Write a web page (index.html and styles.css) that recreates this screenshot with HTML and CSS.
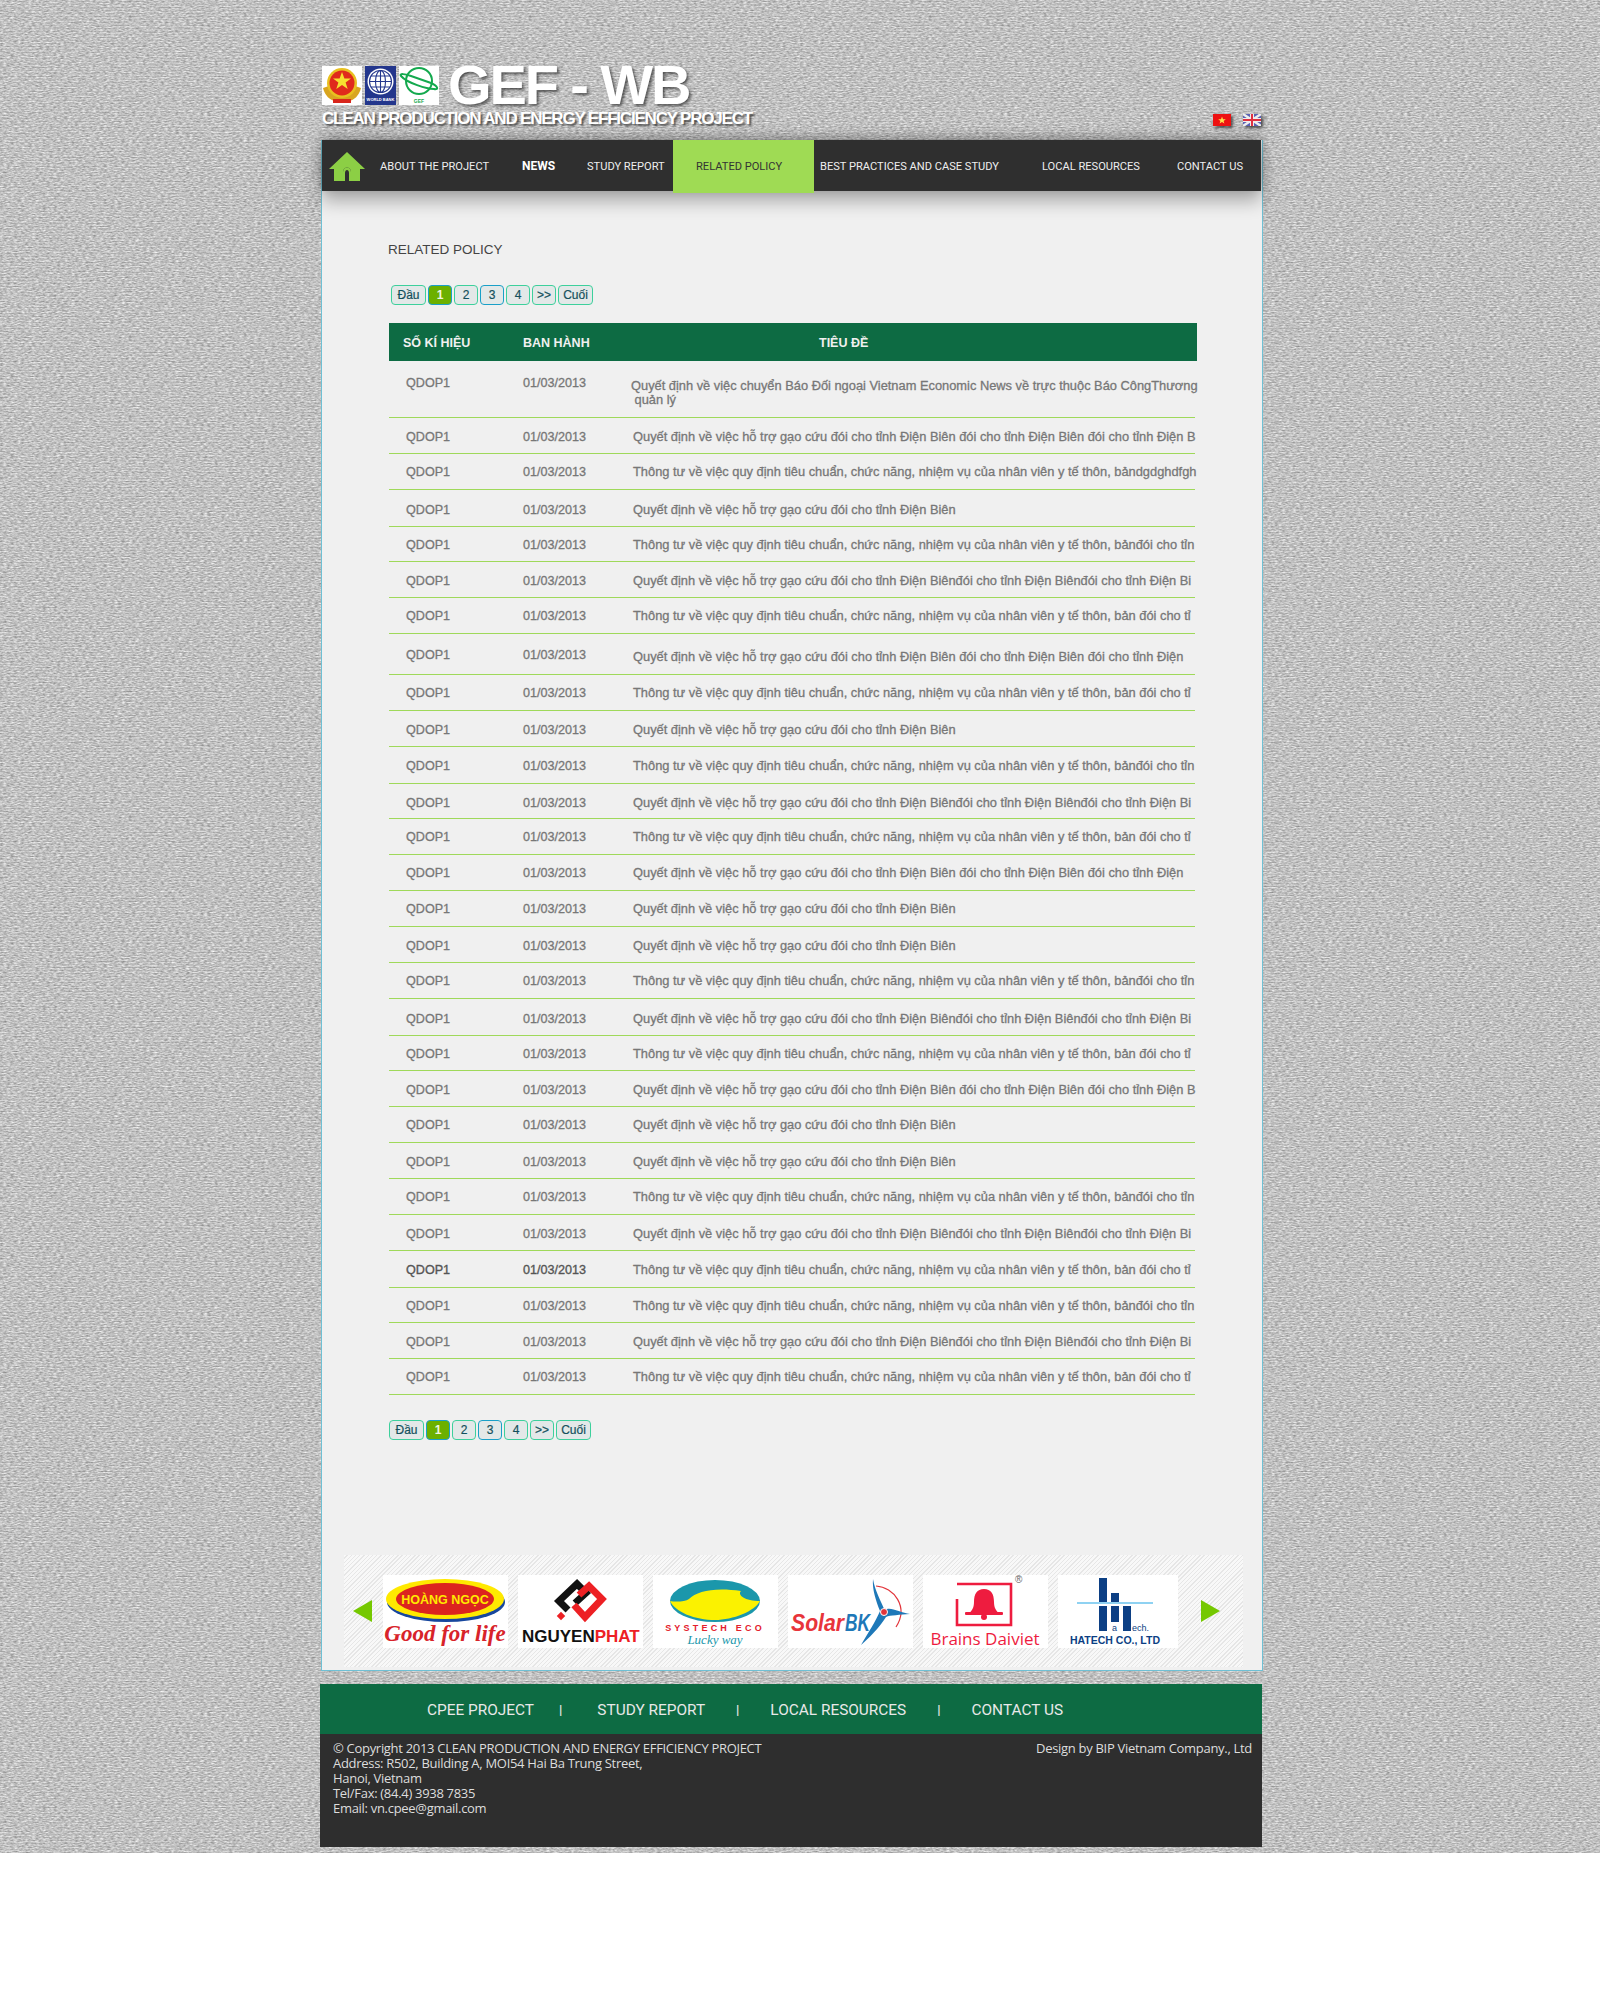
FILE: index.html
```html
<!DOCTYPE html>
<html>
<head>
    <meta charset="utf-8">
    <title>GEF - WB Related Policy</title>
    <link rel="stylesheet" href="styles.css">
</head>
<body>
<div class="page">
<div class="wrap">
    <!-- Header -->
    <div class="header">
        <div class="brand">
            <div class="brand-top">
                <div class="seals">
                    <svg class="seal" width="40" height="39" viewBox="0 0 40 39">
                        <rect width="40" height="39" fill="#fff"/>
                        <path d="M1 22 C3 30 8 34 13 35 L27 35 C32 34 37 30 39 22 L33 20 L7 20Z" fill="#d9a520"/>
                        <circle cx="20" cy="17" r="15" fill="#e8c020"/>
                        <circle cx="20" cy="17" r="12.5" fill="#e02a1c"/>
                        <polygon points="20,6 22.4,12.5 29,12.5 23.6,16.5 25.7,23 20,19 14.3,23 16.4,16.5 11,12.5 17.6,12.5" fill="#f6e030"/>
                        <rect x="11" y="33" width="18" height="4" fill="#d8261c"/>
                    </svg>
                    <svg class="seal" width="31" height="39" viewBox="0 0 31 39">
                        <rect width="31" height="39" fill="#23368c"/>
                        <circle cx="15.5" cy="15.5" r="13" fill="#fff"/>
                        <g fill="none" stroke="#23368c" stroke-width="1.1">
                            <circle cx="15.5" cy="15.5" r="11"/>
                            <ellipse cx="15.5" cy="15.5" rx="5" ry="11"/>
                            <path d="M15.5 4.5V26.5M4.5 15.5H26.5M6 10H25M6 21H25"/>
                        </g>
                        <text x="15.5" y="35" class="seal-text">WORLD BANK</text>
                    </svg>
                    <svg class="seal" width="40" height="39" viewBox="0 0 40 39">
                        <rect width="40" height="39" fill="#fff"/>
                        <g fill="none" stroke="#14a94e" stroke-width="2">
                            <circle cx="20" cy="15" r="13"/>
                            <path d="M2 10 C0 7 6 8 12 10 L32 17 C39 20 40 24 35 23 C28 23 8 17 2 10Z"/>
                        </g>
                        <text x="20" y="37" class="seal-gef">GEF</text>
                    </svg>
                </div>
                <div class="brand-name">GEF - WB</div>
            </div>
            <div class="brand-sub">CLEAN PRODUCTION AND ENERGY EFFICIENCY PROJECT</div>
        </div>
        <div class="flags">
            <svg class="flag" width="18" height="12" viewBox="0 0 18 12">
                <rect width="18" height="12" fill="#ee1111"/>
                <polygon points="9,2.5 10,5.2 12.8,5.2 10.6,6.9 11.4,9.6 9,8 6.6,9.6 7.4,6.9 5.2,5.2 8,5.2" fill="#ffe24a"/>
            </svg>
            <svg class="flag" width="18" height="12" viewBox="0 0 18 12">
                <rect width="18" height="12" fill="#5a62b4"/>
                <path d="M0 0L18 12M18 0L0 12" stroke="#eee" stroke-width="2.4"/>
                <path d="M9 0V12M0 6H18" stroke="#eee" stroke-width="4"/>
                <path d="M9 0V12M0 6H18" stroke="#e03040" stroke-width="2"/>
            </svg>
        </div>
    </div>

    <div class="panel">
        <!-- Menu -->
        <div class="nav">
            <a class="nav-home" href="#">
                <svg width="36" height="29" viewBox="0 0 36 29">
                    <path d="M18 0L36 17H31V29H22V20C22 14 14 14 14 20V29H5V17H0Z" fill="#8ccf45"/>
                    <path d="M14 20C14 14 22 14 22 20V29H20V21C20 17 16 17 16 21V29H14Z" fill="#8ccf45"/>
                </svg>
            </a>
            <a href="#">ABOUT THE PROJECT</a>
            <a class="nav-news" href="#">NEWS</a>
            <a href="#">STUDY REPORT</a>
            <a class="nav-active" href="#">RELATED POLICY</a>
            <a class="nav-best" href="#">BEST PRACTICES AND CASE STUDY</a>
            <a href="#">LOCAL RESOURCES</a>
            <a href="#">CONTACT US</a>
        </div>

        <div class="content">
            <h1 class="page-title">RELATED POLICY</h1>

            <div class="pager pager-top">
                <a class="wide" href="#">Đầu</a>
                <a class="on" href="#">1</a>
                <a href="#">2</a>
                <a class="blue" href="#">3</a>
                <a href="#">4</a>
                <a href="#">&gt;&gt;</a>
                <a class="wide" href="#">Cuối</a>
            </div>

            <div class="table">
                <div class="table-head">
                    <span class="th-code">SỐ KÍ HIỆU</span>
                    <span class="th-date">BAN HÀNH</span>
                    <span class="th-title">TIÊU ĐỀ</span>
                </div>

                <div class="row row-first">
                    <span class="code">QDOP1</span>
                    <span class="date">01/03/2013</span>
                    <span class="title">Quyết định về việc chuyển Báo Đối ngoại Vietnam Economic News về trực thuộc Báo CôngThương<br>&nbsp;quản lý</span>
                </div>
                <div class="row q"><span class="code">QDOP1</span><span class="date">01/03/2013</span><span class="title">Quyết định về việc hỗ trợ gạo cứu đói cho tỉnh Điện Biên đói cho tỉnh Điện Biên đói cho tỉnh Điện B</span></div>
                <div class="row"><span class="code">QDOP1</span><span class="date">01/03/2013</span><span class="title">Thông tư về việc quy định tiêu chuẩn, chức năng, nhiệm vụ của nhân viên y tế thôn, bảndgdghdfgh</span></div>
                <div class="row q h37"><span class="code">QDOP1</span><span class="date">01/03/2013</span><span class="title">Quyết định về việc hỗ trợ gạo cứu đói cho tỉnh Điện Biên</span></div>
                <div class="row h35"><span class="code">QDOP1</span><span class="date">01/03/2013</span><span class="title">Thông tư về việc quy định tiêu chuẩn, chức năng, nhiệm vụ của nhân viên y tế thôn, bảnđói cho tỉn</span></div>
                <div class="row q"><span class="code">QDOP1</span><span class="date">01/03/2013</span><span class="title">Quyết định về việc hỗ trợ gạo cứu đói cho tỉnh Điện Biênđói cho tỉnh Điện Biênđói cho tỉnh Điện Bi</span></div>
                <div class="row"><span class="code">QDOP1</span><span class="date">01/03/2013</span><span class="title">Thông tư về việc quy định tiêu chuẩn, chức năng, nhiệm vụ của nhân viên y tế thôn, bản đói cho tỉ</span></div>
                <div class="row h41"><span class="code">QDOP1</span><span class="date">01/03/2013</span><span class="title low">Quyết định về việc hỗ trợ gạo cứu đói cho tỉnh Điện Biên đói cho tỉnh Điện Biên đói cho tỉnh Điện</span></div>
                <div class="row"><span class="code">QDOP1</span><span class="date">01/03/2013</span><span class="title">Thông tư về việc quy định tiêu chuẩn, chức năng, nhiệm vụ của nhân viên y tế thôn, bản đói cho tỉ</span></div>
                <div class="row q"><span class="code">QDOP1</span><span class="date">01/03/2013</span><span class="title">Quyết định về việc hỗ trợ gạo cứu đói cho tỉnh Điện Biên</span></div>
                <div class="row h37"><span class="code">QDOP1</span><span class="date">01/03/2013</span><span class="title">Thông tư về việc quy định tiêu chuẩn, chức năng, nhiệm vụ của nhân viên y tế thôn, bảnđói cho tỉn</span></div>
                <div class="row q h35"><span class="code">QDOP1</span><span class="date">01/03/2013</span><span class="title">Quyết định về việc hỗ trợ gạo cứu đói cho tỉnh Điện Biênđói cho tỉnh Điện Biênđói cho tỉnh Điện Bi</span></div>
                <div class="row"><span class="code">QDOP1</span><span class="date">01/03/2013</span><span class="title">Thông tư về việc quy định tiêu chuẩn, chức năng, nhiệm vụ của nhân viên y tế thôn, bản đói cho tỉ</span></div>
                <div class="row"><span class="code">QDOP1</span><span class="date">01/03/2013</span><span class="title">Quyết định về việc hỗ trợ gạo cứu đói cho tỉnh Điện Biên đói cho tỉnh Điện Biên đói cho tỉnh Điện</span></div>
                <div class="row"><span class="code">QDOP1</span><span class="date">01/03/2013</span><span class="title">Quyết định về việc hỗ trợ gạo cứu đói cho tỉnh Điện Biên</span></div>
                <div class="row q"><span class="code">QDOP1</span><span class="date">01/03/2013</span><span class="title">Quyết định về việc hỗ trợ gạo cứu đói cho tỉnh Điện Biên</span></div>
                <div class="row"><span class="code">QDOP1</span><span class="date">01/03/2013</span><span class="title">Thông tư về việc quy định tiêu chuẩn, chức năng, nhiệm vụ của nhân viên y tế thôn, bảnđói cho tỉn</span></div>
                <div class="row q h37"><span class="code">QDOP1</span><span class="date">01/03/2013</span><span class="title">Quyết định về việc hỗ trợ gạo cứu đói cho tỉnh Điện Biênđói cho tỉnh Điện Biênđói cho tỉnh Điện Bi</span></div>
                <div class="row h35"><span class="code">QDOP1</span><span class="date">01/03/2013</span><span class="title">Thông tư về việc quy định tiêu chuẩn, chức năng, nhiệm vụ của nhân viên y tế thôn, bản đói cho tỉ</span></div>
                <div class="row q"><span class="code">QDOP1</span><span class="date">01/03/2013</span><span class="title">Quyết định về việc hỗ trợ gạo cứu đói cho tỉnh Điện Biên đói cho tỉnh Điện Biên đói cho tỉnh Điện B</span></div>
                <div class="row"><span class="code">QDOP1</span><span class="date">01/03/2013</span><span class="title">Quyết định về việc hỗ trợ gạo cứu đói cho tỉnh Điện Biên</span></div>
                <div class="row q"><span class="code">QDOP1</span><span class="date">01/03/2013</span><span class="title">Quyết định về việc hỗ trợ gạo cứu đói cho tỉnh Điện Biên</span></div>
                <div class="row"><span class="code">QDOP1</span><span class="date">01/03/2013</span><span class="title">Thông tư về việc quy định tiêu chuẩn, chức năng, nhiệm vụ của nhân viên y tế thôn, bảnđói cho tỉn</span></div>
                <div class="row q"><span class="code">QDOP1</span><span class="date">01/03/2013</span><span class="title">Quyết định về việc hỗ trợ gạo cứu đói cho tỉnh Điện Biênđói cho tỉnh Điện Biênđói cho tỉnh Điện Bi</span></div>
                <div class="row h37 dark"><span class="code">QDOP1</span><span class="date">01/03/2013</span><span class="title">Thông tư về việc quy định tiêu chuẩn, chức năng, nhiệm vụ của nhân viên y tế thôn, bản đói cho tỉ</span></div>
                <div class="row h35"><span class="code">QDOP1</span><span class="date">01/03/2013</span><span class="title">Thông tư về việc quy định tiêu chuẩn, chức năng, nhiệm vụ của nhân viên y tế thôn, bảnđói cho tỉn</span></div>
                <div class="row q"><span class="code">QDOP1</span><span class="date">01/03/2013</span><span class="title">Quyết định về việc hỗ trợ gạo cứu đói cho tỉnh Điện Biênđói cho tỉnh Điện Biênđói cho tỉnh Điện Bi</span></div>
                <div class="row"><span class="code">QDOP1</span><span class="date">01/03/2013</span><span class="title">Thông tư về việc quy định tiêu chuẩn, chức năng, nhiệm vụ của nhân viên y tế thôn, bản đói cho tỉ</span></div>
            </div>

            <div class="pager pager-bottom">
                <a class="wide" href="#">Đầu</a>
                <a class="on" href="#">1</a>
                <a href="#">2</a>
                <a class="blue" href="#">3</a>
                <a href="#">4</a>
                <a href="#">&gt;&gt;</a>
                <a class="wide" href="#">Cuối</a>
            </div>
        </div>

        <!-- Logo partner -->
        <div class="partners">
            <span class="arrow arrow-left"></span>
            <div class="logo">
                <svg width="125" height="73" viewBox="0 0 125 73">
                    <ellipse cx="63" cy="27" rx="59" ry="20" fill="#17479e"/>
                    <ellipse cx="62" cy="24" rx="59" ry="20" fill="#ffe900"/>
                    <ellipse cx="62" cy="24" rx="49" ry="16" fill="#dc241f"/>
                    <text x="62" y="29" class="lg-hoang">HOÀNG NGỌC</text>
                    <text x="62" y="66" class="lg-good">Good for life</text>
                </svg>
            </div>
            <div class="logo">
                <svg width="125" height="73" viewBox="0 0 125 73">
                    <g fill="none" stroke-width="7">
                        <path d="M50 35L41 26L59 9L68 18L57 28" stroke="#111"/>
                        <path d="M61 20L71 11L84 24L67 42L56 30" stroke="#ed2024"/>
                    </g>
                    <rect x="40" y="38" width="6" height="6" transform="rotate(45 43 41)" fill="#ed2024"/>
                    <text x="4" y="67" class="lg-nguyen">NGUYEN<tspan class="lg-phat">PHAT</tspan></text>
                </svg>
            </div>
            <div class="logo">
                <svg width="125" height="73" viewBox="0 0 125 73">
                    <ellipse cx="62" cy="26" rx="45" ry="21" fill="#1b97ab"/>
                    <path d="M17 26C22 27 32 27 36 24C44 16 62 12 88 16C84 20 92 26 107 26C102 36 80 45 62 45C42 45 22 37 17 26Z" fill="#fbf200"/>
                    <text x="62" y="56" class="lg-systech">SYSTECH ECO</text>
                    <text x="62" y="69" class="lg-lucky">Lucky way</text>
                </svg>
            </div>
            <div class="logo">
                <svg width="125" height="73" viewBox="0 0 125 73">
                    <path d="M88 11C106 12 121 32 108 52" fill="none" stroke="#e2343a" stroke-width="1.2"/>
                    <path d="M85 4C87 16 93 26 97 36C100 30 112 38 122 39C112 40 102 40 98 42C92 52 80 64 73 70C80 58 88 46 92 36C88 26 84 14 85 4Z" fill="#1e78b8"/>
                    <circle cx="96" cy="37" r="3.5" fill="#e2343a" stroke="#fff"/>
                    <text x="3" y="56" class="lg-solar" textLength="53" lengthAdjust="spacingAndGlyphs">Solar</text>
                    <text x="57" y="56" class="lg-solar lg-bk" textLength="25" lengthAdjust="spacingAndGlyphs">BK</text>
                </svg>
            </div>
            <div class="logo">
                <svg width="125" height="73" viewBox="0 0 125 73">
                    <path d="M34 9H88V50H34V24" fill="none" stroke="#ee1c3f" stroke-width="2.6"/>
                    <path d="M61 14C68 14 71 19 71 27C71 33 73 36 78 40H44C49 36 51 33 51 27C51 19 54 14 61 14Z" fill="#ee1c3f"/>
                    <rect x="42" y="37" width="38" height="3" rx="1" fill="#ee1c3f"/>
                    <circle cx="61" cy="42" r="3" fill="#ee1c3f"/>
                    <text x="92" y="8" class="lg-reg">®</text>
                    <text x="62" y="70" class="lg-brains">Brains Daiviet</text>
                </svg>
            </div>
            <div class="logo logo-last">
                <svg width="120" height="73" viewBox="0 0 120 73">
                    <rect x="41" y="3" width="8" height="24" fill="#0c3f84"/>
                    <rect x="53" y="18" width="8" height="9" fill="#0c3f84"/>
                    <rect x="19" y="27" width="76" height="2" fill="#8fd2f2"/>
                    <rect x="41" y="31" width="8" height="25" fill="#0c3f84"/>
                    <rect x="53" y="31" width="8" height="16" fill="#0c3f84"/>
                    <rect x="65" y="31" width="8" height="25" fill="#0c3f84"/>
                    <text x="54" y="56" class="lg-ha">a</text>
                    <text x="74" y="56" class="lg-ha">ech.</text>
                    <text x="57" y="69" class="lg-hatech">HATECH CO., LTD</text>
                </svg>
            </div>
            <span class="arrow arrow-right"></span>
        </div>
    </div>

    <!-- Footer -->
    <div class="footer">
        <div class="footer-nav">
            <a class="first" href="#">CPEE PROJECT</a><span class="sep">|</span>
            <a href="#">STUDY REPORT</a><span class="sep">|</span>
            <a href="#">LOCAL RESOURCES</a><span class="sep">|</span>
            <a href="#">CONTACT US</a>
        </div>
        <div class="footer-info">
            <p>© Copyright 2013 CLEAN PRODUCTION AND ENERGY EFFICIENCY PROJECT<br>
            Address: R502, Building A, MOI54 Hai Ba Trung Street,<br>
            Hanoi, Vietnam<br>
            Tel/Fax: (84.4) 3938 7835<br>
            Email: vn.cpee@gmail.com</p>
            <p>Design by BIP Vietnam Company., Ltd</p>
        </div>
    </div>
</div>
</div>
</body>
</html>
```
FILE: styles.css
```css
body {
    margin: 0;
    background: #fff;
    font-family: "Liberation Sans", Arial, sans-serif;
}

a {
    color: inherit;
    text-decoration: none;
}

.page {
    padding-bottom: 6px;
    background-color: #bdbdbd;
    background-image:
        repeating-linear-gradient(0deg, rgba(0,0,0,.06) 0 1px, transparent 1px 3px),
        url("data:image/svg+xml,%3Csvg xmlns='http://www.w3.org/2000/svg' width='400' height='400'%3E%3Cfilter id='n' color-interpolation-filters='sRGB'%3E%3CfeTurbulence type='fractalNoise' baseFrequency='.28 .8' numOctaves='2' stitchTiles='stitch'/%3E%3CfeColorMatrix values='.5 0 0 0 .52 .5 0 0 0 .52 .5 0 0 0 .52 0 0 0 0 1'/%3E%3C/filter%3E%3Crect width='400' height='400' filter='url(%23n)'/%3E%3C/svg%3E");
}

.wrap {
    width: 960px;
    margin: 0 auto;
}

/* Header */
.header {
    display: flex;
    justify-content: space-between;
    align-items: flex-end;
    box-sizing: border-box;
    width: 941px;
    height: 140px;
    padding: 60px 0 14px 2px;
}

.brand {
    align-self: flex-start;
    color: #fff;
    font-weight: bold;
}

.brand-top {
    display: flex;
    align-items: center;
}

.seals {
    display: flex;
    align-items: center;
    gap: 3px;
    width: 126px;
}

.seal-text {
    font-size: 4px;
    fill: #fff;
    text-anchor: middle;
}

.seal-gef {
    font-size: 5px;
    font-weight: bold;
    fill: #14a94e;
    text-anchor: middle;
}

.brand-name {
    font-size: 56px;
    line-height: 50px;
    letter-spacing: -2.1px;
    text-shadow: 2px 2px 3px rgba(0,0,0,.55);
}

.brand-sub {
    font-size: 17px;
    line-height: 18px;
    letter-spacing: -1.2px;
    white-space: nowrap;
    text-shadow: 2px 2px 2px rgba(0,0,0,.6);
}

.flags {
    display: flex;
    gap: 12px;
}

.flag {
    display: block;
    box-shadow: 2px 2px 3px rgba(0,0,0,.6);
}

/* Panel */
.panel {
    box-sizing: border-box;
    width: 942px;
    margin-left: 1px;
    height: 1531px;
    background: #f0f0f0;
    border: 1px solid #6fc0d4;
    border-top: 0;
}

.nav {
    display: grid;
    grid-template-columns: 58px 142px 65px 86px 141px 228px 135px 84px;
    width: 939px;
    height: 51px;
    background: #2f2f2f;
    color: #eee;
    font-family: Roboto, "Liberation Sans", sans-serif;
    font-size: 11.1px;
    line-height: 53px;
    white-space: nowrap;
    box-shadow: 0 10px 18px rgba(0,0,0,.3), 0 -4px 10px rgba(0,0,0,.25);
}

.nav-home {
    padding: 12px 0 0 7px;
    line-height: 0;
}

.nav-news {
    color: #fff;
    font-size: 12px;
    font-weight: bold;
}

.nav-active {
    padding-left: 23px;
    background: #9fdb54;
    color: #333;
}

.nav-best {
    padding-left: 6px;
}

.content {
    padding: 0 0 0 66px;
}

.page-title {
    margin: 0;
    padding-top: 50px;
    color: #444;
    font-size: 13.5px;
    font-weight: normal;
    line-height: 18px;
}

/* Pagination */
.pager {
    display: flex;
    gap: 2px;
}

.pager-top {
    margin: 26px 0 18px 3px;
}

.pager-bottom {
    margin: 25px 0 0 1px;
}

.pager a {
    box-sizing: border-box;
    width: 24px;
    height: 20px;
    background: #e3e8e8;
    border: 1px solid #3dd09c;
    border-radius: 4px;
    color: #14505c;
    font-size: 12px;
    line-height: 18px;
    text-align: center;
    -webkit-text-stroke: .2px #14505c;
}

.pager a.wide {
    width: 35px;
}

.pager a.on {
    background: #6cb000;
    border-color: #1aa0c8;
    color: #eef5e0;
    -webkit-text-stroke: 0;
    font-weight: bold;
}

.pager a.blue {
    border-color: #1aa0c8;
}

/* Table */
.table {
    width: 808px;
    margin-left: 1px;
}

.table-head {
    display: flex;
    height: 38px;
    background: #0d6b43;
    color: #f0f0f0;
    font-size: 12.5px;
    font-weight: bold;
    line-height: 40px;
}

.th-code {
    width: 134px;
    padding-left: 14px;
    box-sizing: border-box;
}

.th-date {
    width: 296px;
}

.row {
    display: flex;
    align-items: center;
    box-sizing: border-box;
    width: 806px;
    height: 36px;
    padding-top: 1px;
    border-bottom: 1px solid #9fd95a;
    color: #777;
    font-size: 12.6px;
    line-height: 14px;
    white-space: nowrap;
}

.row.q {
    padding-top: 3px;
}

.row.h35 {
    height: 35px;
}

.row.h37 {
    height: 37px;
}

.row.h41 {
    height: 41px;
}

.row-first {
    align-items: flex-start;
    height: 57px;
    padding-top: 15px;
}

.row-first .title {
    margin-left: -2px;
    padding-top: 3px;
}

.code {
    width: 134px;
    padding-left: 17px;
    box-sizing: border-box;
    -webkit-text-stroke: .3px #777;
}

.date {
    width: 110px;
    -webkit-text-stroke: .3px #777;
}

.title {
    flex: 1;
    width: 0;
    font-size: 12.85px;
    -webkit-text-stroke: .3px #777;
}

.title.low {
    padding-top: 4px;
}

.dark .code,
.dark .date {
    color: #555;
    -webkit-text-stroke: .35px #555;
}

/* Partners */
.partners {
    display: flex;
    align-items: center;
    box-sizing: border-box;
    width: 899px;
    height: 112px;
    margin: 115px 0 0 22px;
    padding-left: 39px;
    background: repeating-linear-gradient(135deg, #f8f8f8 0 2px, #e6e6e6 2px 3px);
    position: relative;
}

.logo {
    width: 125px;
    height: 73px;
    margin-right: 10px;
    background: #fff;
}

.logo-last {
    width: 120px;
    margin-right: 0;
}

.logo svg {
    display: block;
    overflow: visible;
}

.arrow {
    position: absolute;
    top: 45px;
    width: 0;
    height: 0;
    border-top: 11px solid transparent;
    border-bottom: 11px solid transparent;
}

.arrow-left {
    left: 9px;
    border-right: 19px solid #75c800;
}

.arrow-right {
    right: 23px;
    border-left: 19px solid #75c800;
}

.lg-hoang {
    fill: #ffe900;
    font-size: 12.5px;
    font-weight: bold;
    text-anchor: middle;
}

.lg-good {
    fill: #d8232a;
    font-family: "Liberation Serif", serif;
    font-size: 23px;
    font-style: italic;
    font-weight: bold;
    text-anchor: middle;
}

.lg-nguyen {
    fill: #111;
    font-size: 17px;
    font-weight: bold;
}

.lg-phat {
    fill: #ed2024;
}

.lg-systech {
    fill: #e4202c;
    font-size: 9px;
    font-weight: bold;
    letter-spacing: 3.2px;
    text-anchor: middle;
}

.lg-lucky {
    fill: #1b97ab;
    font-family: "Liberation Serif", serif;
    font-size: 13px;
    font-style: italic;
    text-anchor: middle;
}

.lg-solar {
    fill: #e8343a;
    font-size: 24px;
    font-style: italic;
    font-weight: bold;
}

.lg-solar.lg-bk {
    fill: #1e78b8;
}

.lg-reg {
    fill: #666;
    font-size: 10px;
}

.lg-brains {
    fill: #ee1c3f;
    font-family: "Open Sans", sans-serif;
    font-size: 17px;
    text-anchor: middle;
}

.lg-ha {
    fill: #0c3f84;
    font-size: 9px;
}

.lg-hatech {
    fill: #0c3f84;
    font-size: 10.5px;
    font-weight: bold;
    text-anchor: middle;
}

/* Footer */
.footer {
    width: 942px;
    margin-top: 13px;
}

.footer-nav {
    display: flex;
    height: 50px;
    padding-left: 107px;
    background: #0d6b43;
    color: #e8e8e8;
    font-family: Roboto, "Liberation Sans", sans-serif;
    font-size: 15.4px;
    line-height: 52px;
    white-space: nowrap;
}

.sep {
    margin: 0 31px;
    font-size: 13px;
    font-weight: bold;
}

.footer-nav .first + .sep {
    margin: 0 35px 0 25px;
}

.footer-info {
    display: flex;
    justify-content: space-between;
    box-sizing: border-box;
    height: 113px;
    padding: 7px 10px 0 13px;
    background: #2e2e2e;
    color: #ddd;
    font-family: "Open Sans", sans-serif;
    font-size: 13px;
    line-height: 15px;
    letter-spacing: -.3px;
}

.footer-info p {
    margin: 0;
}
```
